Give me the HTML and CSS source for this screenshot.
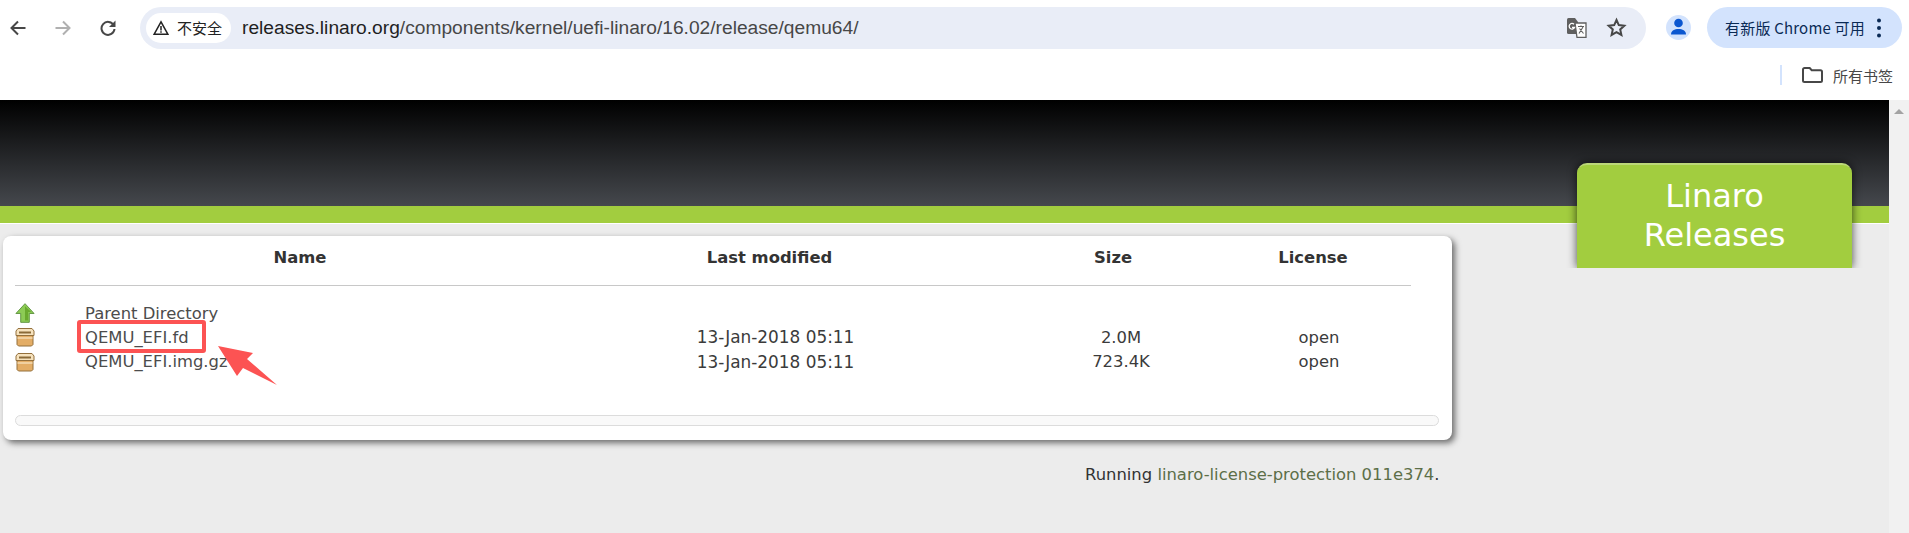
FILE: index.html
```html
<!DOCTYPE html>
<html lang="zh">
<head>
    <meta charset="UTF-8">
    <title>Index of /components/kernel/uefi-linaro/16.02/release/qemu64</title>
    <link rel="stylesheet" href="styles.css">
</head>
<body>
    <div class="toolbar">
        <svg class="nav-icon" viewBox="0 0 16 16"><path d="M15.500 8H2M8 1.500L1.500 8 8 14.500" fill="none" stroke="#474747" stroke-width="2"/></svg>
        <svg class="nav-icon" viewBox="0 0 16 16"><path d="M.5 8H14M8 1.500L14.500 8 8 14.500" fill="none" stroke="#b0b0b0" stroke-width="2"/></svg>
        <svg class="nav-icon nav-reload" viewBox="0 0 16 16"><path d="M13.600 5A6.500 6.500 0 1 0 14.500 9" fill="none" stroke="#474747" stroke-width="2"/><path d="M15.500 .5v6.500H9z" fill="#474747"/></svg>
        <div class="omnibox">
            <div class="security">
                <svg class="warn" viewBox="0 0 16 16"><path d="M8 1.800L1.200 14.200h13.600z" fill="none" stroke="#222" stroke-width="1.500"/><path d="M8 6v4.500M8 11.300v1.500" stroke="#222" stroke-width="1.500"/></svg>
                <span>不安全</span>
            </div>
            <div class="url">releases.linaro.org<span class="url-path">/components/kernel/uefi-linaro/16.02/release/qemu64/</span></div>
            <svg class="translate" viewBox="0 0 21 20">
                <path d="M1 1.500Q1 0 2.500 0H9l3 4v12H2.500Q1 16 1 14.500z" fill="#5f5f5f"/>
                <path d="M9 5h11v14.500H11z" fill="#fff" stroke="#5f5f5f" stroke-width="1.300"/>
                <path d="M8 6.300a2.800 2.800 0 1 0 .6 3H6" fill="none" stroke="#fff" stroke-width="1.300"/>
                <path d="M12 8.500h6M15 7.500v1M13 15.500l4-6.500M13.500 10.500l4 5" fill="none" stroke="#5f5f5f" stroke-width="1.100"/>
            </svg>
            <svg class="star" viewBox="0 0 21 21"><path d="M10.500 3l2.300 5.100 5.500.6-4.100 3.700 1.200 5.500-4.900-2.800-4.900 2.800 1.200-5.500-4.100-3.700 5.500-.6z" fill="none" stroke="#474747" stroke-width="2"/></svg>
        </div>
        <div class="avatar">
            <svg viewBox="0 0 25 25"><circle cx="12.500" cy="8" r="4.300" fill="#0b57d0"/><path d="M5 19.500c0-4 3.600-5.500 7.500-5.500s7.500 1.500 7.500 5.500z" fill="#0b57d0"/></svg>
        </div>
        <div class="update">
            <span>有新版 Chrome 可用</span>
            <svg class="dots" viewBox="0 0 6 20"><circle cx="3" cy="2.500" r="2" fill="#0a2a55"/><circle cx="3" cy="10" r="2" fill="#0a2a55"/><circle cx="3" cy="17.500" r="2" fill="#0a2a55"/></svg>
        </div>
    </div>

    <div class="bookmarks">
        <div class="divider"></div>
        <svg class="folder" viewBox="0 0 21 16"><path d="M1 2.500C1 1.600 1.700 1 2.500 1h5.200l2 2.200h8.800c.8 0 1.500.700 1.500 1.500v8.800c0 .8-.700 1.500-1.500 1.500h-16C1.700 15 1 14.300 1 13.500z" fill="none" stroke="#474747" stroke-width="2"/></svg>
        <span>所有书签</span>
    </div>

    <div class="viewport">
        <div class="page">
            <div class="header"></div>
            <div class="green-bar"></div>
            <div class="badge">Linaro<br>Releases</div>

            <div class="panel">
                <table class="listing">
                    <thead>
                        <tr>
                            <th class="col-icon"></th>
                            <th class="col-name">Name</th>
                            <th class="col-date">Last modified</th>
                            <th class="col-size">Size</th>
                            <th class="col-license">License</th>
                        </tr>
                    </thead>
                    <tbody>
                        <tr>
                            <td>
                                <svg class="file-icon" viewBox="0 0 20 21"><path d="M10 .7L19.500 11H14.500v9.300H5.500V11H.5z" fill="#8ccb55" stroke="#5f9440" stroke-width="1"/><path d="M10 3.500V18.500h3.300V9.500h3.200z" fill="#69a92e"/></svg>
                            </td>
                            <td class="name"><a href="#">Parent Directory</a></td>
                            <td></td><td></td><td></td>
                        </tr>
                        <tr>
                            <td>
                                <svg class="file-icon" viewBox="0 0 20 20"><path d="M3 1.500h14l2 2.500v4.500H1V4z" fill="#f6e2bd" stroke="#94703c"/><path d="M4 4.500h12v2H4z" fill="#8a6a38"/><path d="M2 8.500h16v9l-1.500 1.500h-13L2 17.500z" fill="#e3ad66" stroke="#94703c"/><path d="M2.500 11h15" stroke="#f5dcb4" stroke-width="1.500"/></svg>
                            </td>
                            <td class="name"><a href="#">QEMU_EFI.fd</a></td>
                            <td class="date">13-Jan-2018 05:11</td>
                            <td class="size">2.0M</td>
                            <td class="license">open</td>
                        </tr>
                        <tr>
                            <td>
                                <svg class="file-icon" viewBox="0 0 20 20"><path d="M3 1.500h14l2 2.500v4.500H1V4z" fill="#f6e2bd" stroke="#94703c"/><path d="M4 4.500h12v2H4z" fill="#8a6a38"/><path d="M2 8.500h16v9l-1.500 1.500h-13L2 17.500z" fill="#e3ad66" stroke="#94703c"/><path d="M2.500 11h15" stroke="#f5dcb4" stroke-width="1.500"/></svg>
                            </td>
                            <td class="name"><a href="#">QEMU_EFI.img.gz</a></td>
                            <td class="date">13-Jan-2018 05:11</td>
                            <td class="size">723.4K</td>
                            <td class="license">open</td>
                        </tr>
                    </tbody>
                </table>
                <div class="scrollbox"></div>
            </div>

            <p class="footer">Running <a href="#">linaro-license-protection 011e374</a>.</p>

            <!-- annotation added on top of the screenshot -->
            <div class="mark-box"></div>
            <svg class="mark-arrow" viewBox="0 0 60 45"><path d="M1 0L36 7 30 13 60 39 26 22 20 30z" fill="#fc5353"/></svg>
        </div>
        <div class="scrollbar">
            <svg class="scroll-up" viewBox="0 0 10 6"><path d="M5 0l5 5H0z" fill="#a3a3a3"/></svg>
        </div>
    </div>
</body>
</html>
```

FILE: styles.css
```css
* {
    margin: 0;
    padding: 0;
    box-sizing: border-box;
}

html, body {
    height: 533px;
    overflow: hidden;
}

body {
    background: white;
    font-family: "DejaVu Sans", Verdana, sans-serif;
    color: #333;
}

a {
    color: inherit;
    text-decoration: none;
}

/* browser chrome */
.toolbar {
    height: 50px;
    padding: 6px 0 1px 10px;
    display: flex;
    align-items: center;
    font-family: "Noto Sans CJK SC", sans-serif;
}

.nav-icon {
    width: 16px;
    height: 16px;
    margin-right: 29px;
    flex: none;
}

.nav-reload {
    margin-right: 24px;
}

.omnibox {
    width: 1506px;
    height: 42px;
    background: #e9edf7;
    border-radius: 21px;
    display: flex;
    align-items: center;
    padding-left: 6px;
    flex: none;
}

.security {
    height: 30px;
    width: 85px;
    background: white;
    border-radius: 15px;
    display: flex;
    align-items: center;
    padding-left: 7px;
    gap: 8px;
    font-size: 15px;
    color: #222;
    flex: none;
}

.warn {
    width: 16px;
    height: 16px;
}

.url {
    margin-left: 11px;
    font-size: 19.200px;
    color: #1f1f1f;
    flex: 1;
    font-family: "Liberation Sans", sans-serif;
}

.url-path {
    color: #474747;
}

.translate {
    width: 21px;
    height: 20px;
    margin-right: 19px;
}

.star {
    width: 21px;
    height: 21px;
    margin-right: 19px;
}

.avatar {
    width: 25px;
    height: 25px;
    margin-left: 20px;
    border-radius: 50%;
    background: #d3e3fd;
    flex: none;
}

.avatar svg {
    display: block;
}

.update {
    width: 195px;
    height: 41px;
    margin-left: 16px;
    background: #d3e3fd;
    border-radius: 21px;
    display: flex;
    align-items: center;
    padding-left: 18px;
    font-size: 15px;
    letter-spacing: 0.2px;
    color: #0a2a55;
    flex: none;
}

.dots {
    width: 6px;
    height: 20px;
    margin-left: 11px;
}

.bookmarks {
    height: 50px;
    padding-right: 16px;
    display: flex;
    align-items: center;
    justify-content: flex-end;
    font-size: 15px;
    color: #474747;
    font-family: "Noto Sans CJK SC", sans-serif;
}

.divider {
    width: 2px;
    height: 20px;
    background: #d3e3fd;
    margin-right: 20px;
}

.folder {
    width: 21px;
    height: 16px;
    margin-right: 10px;
}

/* page */
.viewport {
    display: flex;
    height: 433px;
}

.page {
    position: relative;
    flex: 1;
    background: #ececec;
}

.scrollbar {
    width: 20px;
    background: #f1f1f1;
    padding: 9px 5px 0;
}

.scroll-up {
    display: block;
    width: 10px;
    height: 6px;
}

.header {
    height: 106px;
    background: linear-gradient(#000 0%, #45484d 100%);
}

.green-bar {
    height: 17px;
    background: #a2cd3f;
    box-shadow: 0 1px 0 white;
}

.badge {
    position: absolute;
    left: 1577px;
    top: 63px;
    width: 275px;
    height: 105px;
    padding-top: 12px;
    background: #a2cd3f;
    border-radius: 10px 10px 0 0;
    border-top: 2px solid #bcd878;
    box-shadow: 0 0 10px rgba(0, 0, 0, 0.7);
    clip-path: inset(-14px -14px 0 -14px);
    color: white;
    font-size: 32px;
    line-height: 39px;
    text-align: center;
}

.panel {
    width: 1449px;
    height: 204px;
    margin: 13px 0 0 3px;
    padding: 12px 12px 0;
    background: white;
    border-radius: 8px;
    box-shadow: 3px 3px 6px rgba(0, 0, 0, 0.55);
}

.listing {
    width: 1396px;
    table-layout: fixed;
    border-collapse: collapse;
    font-size: 16.400px;
    color: #3b3b3b;
}

.listing th {
    height: 37px;
    vertical-align: top;
    line-height: 20px;
    font-weight: bold;
    border-bottom: 1px solid #c8c8c8;
    color: #333;
}

.listing tbody tr {
    height: 24.500px;
}

.listing tbody tr:first-child {
    height: 40px;
}

.listing tbody tr:first-child td {
    padding-top: 16px;
}

.col-icon { width: 70px; }
.col-name { width: 430px; }
.col-date { width: 509px; }
.col-size { width: 178px; }
.col-license { width: 209px; padding-left: 13px; }

.name a {
    color: #4c4c4c;
}

.date {
    font-size: 16.900px;
    text-align: center;
    padding-left: 12px;
}

.size {
    text-align: center;
    padding-left: 16px;
}

.license {
    text-align: center;
    padding-left: 25px;
}

.file-icon {
    display: block;
    width: 20px;
    height: 20px;
}

.scrollbox {
    width: 1424px;
    height: 11px;
    margin-top: 41px;
    border: 1px solid #dcdcdc;
    border-radius: 6px;
    background: #f9f9f9;
}

.footer {
    margin: 25px 0 0 1085px;
    font-size: 16.400px;
    color: #333;
    white-space: nowrap;
}

.footer a {
    color: #5c6f48;
}

/* red annotation */
.mark-box {
    position: absolute;
    left: 77px;
    top: 220px;
    width: 129px;
    height: 33px;
    border: 4px solid #fc5353;
    border-radius: 3px;
}

.mark-arrow {
    position: absolute;
    left: 217px;
    top: 246px;
    width: 60px;
    height: 45px;
}
```
